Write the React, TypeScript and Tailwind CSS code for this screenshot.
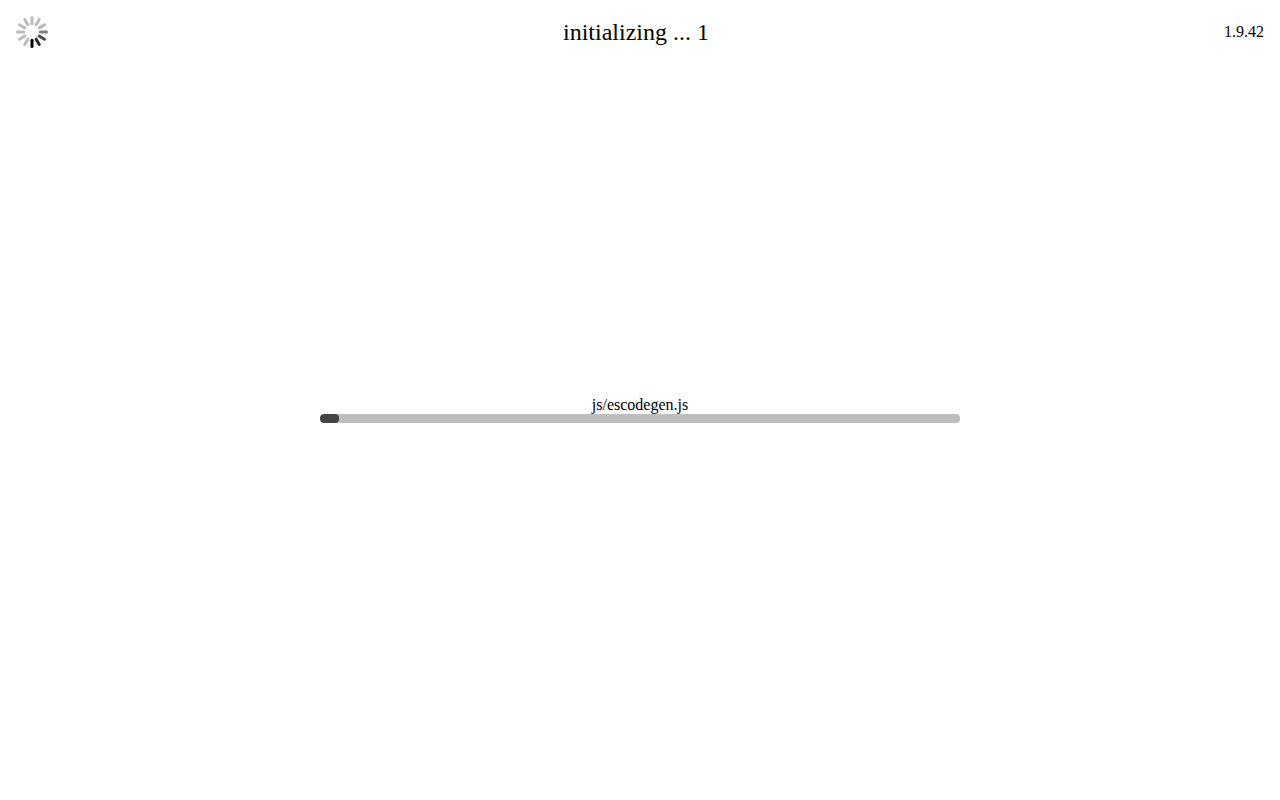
const spokes = [
  { a: 180, c: "#000000" },
  { a: 150, c: "#2a2a2a" },
  { a: 120, c: "#4d4d4d" },
  { a: 90, c: "#808080" },
  { a: 60, c: "#b8b8b8" },
  { a: 30, c: "#bcbcbc" },
  { a: 0, c: "#bcbcbc" },
  { a: 330, c: "#bcbcbc" },
  { a: 300, c: "#bcbcbc" },
  { a: 270, c: "#bcbcbc" },
  { a: 240, c: "#bcbcbc" },
  { a: 210, c: "#bcbcbc" },
];

function Spinner() {
  return (
    <svg width="32" height="32" viewBox="0 0 32 32" className="block">
      {spokes.map((s) => (
        <line
          key={s.a}
          x1="16"
          y1="1.5"
          x2="16"
          y2="7.7"
          stroke={s.c}
          strokeWidth="3"
          strokeLinecap="round"
          transform={`rotate(${s.a} 16 16)`}
        />
      ))}
    </svg>
  );
}

export default function App() {
  return (
    <div className="h-[800px] bg-white text-black font-['Liberation_Serif',serif] flex flex-col">
      <div className="flex justify-between items-center px-4 pt-4">
        <Spinner />
        <div className="text-2xl leading-8">initializing ... 1</div>
        <div className="text-base leading-8">1.9.42</div>
      </div>
      <div className="mt-[348px] w-[640px] mx-auto">
        <div className="text-base leading-[18px] text-center">js/escodegen.js</div>
        <div className="h-[9px] rounded-[4px] bg-[#bebebe] overflow-hidden">
          <div className="h-full w-[19px] rounded-[4px] bg-[#444444]" />
        </div>
      </div>
    </div>
  );
}
